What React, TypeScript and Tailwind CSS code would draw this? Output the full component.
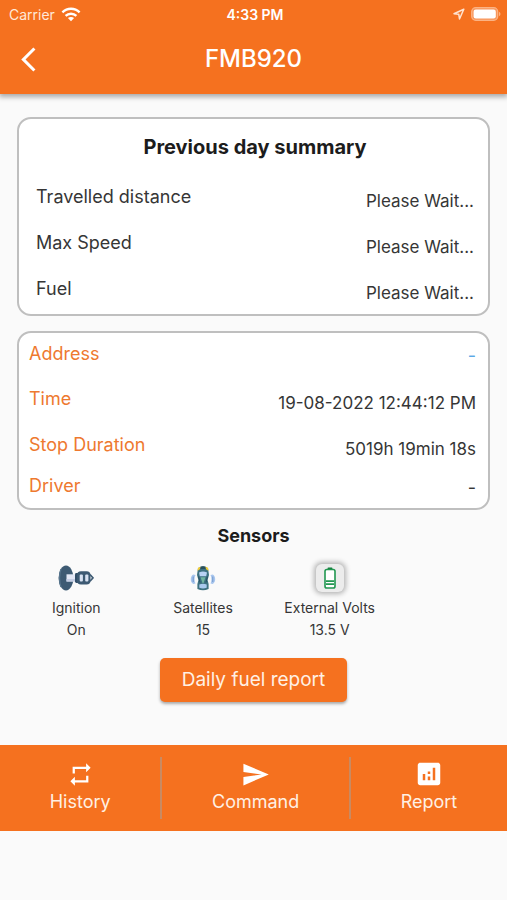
import type { ReactNode } from "react";
import { MdAnalytics, MdArrowBackIosNew, MdRepeat, MdSend } from "react-icons/md";

function WifiIcon() {
  return (
    <svg viewBox="0 0 20 15" className="h-[15px] w-5" aria-hidden="true">
      <g fill="none" stroke="white" strokeWidth="2.4">
        <path d="M1.4 5.4C6.3 0.6 13.7 0.6 18.6 5.4" />
        <path d="M4.6 8.9C7.6 6 12.4 6 15.4 8.9" />
      </g>
      <path d="M6.9 11C8.7 9.5 11.3 9.5 13.1 11L10 14.2Z" fill="white" />
    </svg>
  );
}

function LocationIcon() {
  return (
    <svg viewBox="0 0 12 12" className="h-3 w-3" fill="none" stroke="#ffe3d0" strokeWidth="1.5" strokeLinejoin="round" aria-hidden="true">
      <path d="M10.8 1.2L1 5.7L5.8 6.3L6.5 11Z" />
    </svg>
  );
}

function BatteryIcon() {
  return (
    <svg viewBox="0 0 30 14" className="h-[14px] w-[30px]" aria-hidden="true">
      <rect x="0.7" y="0.7" width="26" height="12.6" rx="4" fill="#f8965b" stroke="#fbb384" strokeWidth="1.3" />
      <rect x="2.6" y="2.6" width="22.2" height="8.8" rx="2.2" fill="white" />
      <path d="M28 4.8C30 5.6 30 8.4 28 9.2Z" fill="#fbb384" />
    </svg>
  );
}

function IgnitionIcon() {
  return (
    <svg viewBox="0 0 36 26" className="h-[26px] w-9" aria-hidden="true">
      <ellipse cx="8" cy="13" rx="7.4" ry="12.4" fill="#3d5a73" />
      <path d="M3 4C1 9 1 17 3 22" fill="none" stroke="#56748c" strokeWidth="1.4" />
      <rect x="8.5" y="9.3" width="8.5" height="7.2" fill="#e2e7f5" />
      <path d="M8.5 14H17V16.5H8.5Z" fill="#c5cee5" />
      <rect x="17" y="8" width="4" height="10" rx="1.4" fill="#324e68" />
      <rect x="19" y="6.2" width="13.5" height="13.4" rx="4" fill="#3d5a73" />
      <rect x="21.7" y="9.4" width="3.2" height="7" rx="1" fill="#d8e2f2" />
      <rect x="27.2" y="9.4" width="3.2" height="7" rx="1" fill="#d8e2f2" />
      <path d="M32 9.5L35 12.9L32 16.3" fill="none" stroke="#3d5a73" strokeWidth="1.6" />
    </svg>
  );
}

function CarIcon() {
  return (
    <svg viewBox="0 0 26 26" className="h-[26px] w-[26px]" aria-hidden="true">
      <g fill="#a9c6ee">
        <path d="M5.5 10C4.2 12.6 4.2 16 5.5 18.6L3.2 19C0 17.4 0 11.4 3.2 9.6Z" />
        <path d="M20.5 10C21.8 12.6 21.8 16 20.5 18.6L22.8 19C26 17.4 26 11.4 22.8 9.6Z" />
      </g>
      <path d="M3.2 11.5V17M22.8 11.5V17" stroke="#6f96ca" strokeWidth="1" />
      <path d="M8 3.2Q13 -0.6 18 3.2L19 10L17.6 15L18.6 19V24Q13 26.4 7.4 24V19L8.4 15L7 10Z" fill="#3d7180" />
      <path d="M10 2Q13 0.4 16 2L15.5 4H10.5Z" fill="#284f5d" />
      <path d="M7.4 6L8 2.8L10.6 1.8L9.9 4.2ZM18.6 6L18 2.8L15.4 1.8L16.1 4.2Z" fill="#f2cd35" />
      <path d="M9 7.6Q13 5.6 17 7.6L16.2 11.2H9.8Z" fill="#b9d2f3" />
      <path d="M10.5 12.2H15.5L13.5 18H12.5Z" fill="#72b5a0" />
      <path d="M9.3 19.4Q13 18 16.7 19.4V22.8Q13 24 9.3 22.8Z" fill="#a9c9ed" />
      <path d="M8.6 11.5L10 17.5M17.4 11.5L16 17.5" stroke="#254d62" strokeWidth="1" />
    </svg>
  );
}

function VoltsIcon() {
  return (
    <span className="flex h-7 w-7 items-center justify-center rounded-md bg-[#ececec] shadow-[0_0_5px_2px_#b4b4b4]">
      <svg viewBox="0 0 12 22" className="h-[22px] w-3" aria-hidden="true">
        <rect x="3.6" y="0.4" width="4.8" height="2.6" rx="0.7" fill="#147d3d" />
        <rect x="1" y="2.5" width="10" height="18.5" rx="1.8" fill="white" stroke="#219750" strokeWidth="1.6" />
        <path d="M2 14.2H10M2 17.2H10" stroke="#219750" strokeWidth="1.8" />
      </svg>
    </span>
  );
}

function SummaryRow({ label, value }: { label: string; value: string }) {
  return (
    <div className="flex h-[46px] justify-between leading-6">
      <dt>{label}</dt>
      <dd className="pt-1 text-[17px]">{value}</dd>
    </div>
  );
}

function Sensor({ icon, name, value }: { icon: ReactNode; name: string; value: string }) {
  return (
    <li className="flex flex-col items-center text-sm leading-[22px]">
      <span className="mb-[3px] flex h-8 items-center">{icon}</span>
      <span>{name}</span>
      <span>{value}</span>
    </li>
  );
}

function NavButton({ icon, label }: { icon: ReactNode; label: string }) {
  return (
    <button type="button" className="flex flex-col items-center leading-7">
      <span className="flex h-7 items-center">{icon}</span>
      <span>{label}</span>
    </button>
  );
}

export default function App() {
  return (
    <div className="min-h-screen bg-[#fafafa] font-['Inter',sans-serif] text-[#363636]">
      <header className="h-[94px] bg-[#f5711f] text-white shadow-[0_2px_5px_1px_#a9a9a9]">
        <div className="grid h-7 grid-cols-3 items-center pr-1.5 pl-[9px] text-[14px]">
          <div className="flex items-center gap-1.5 text-[#ffe8d8]">
            <span>Carrier</span>
            <WifiIcon />
          </div>
          <span className="text-center font-semibold">4:33 PM</span>
          <div className="flex items-center justify-end gap-1.5">
            <LocationIcon />
            <BatteryIcon />
          </div>
        </div>
        <div className="grid h-[62px] grid-cols-[48px_1fr_48px] items-center">
          <button type="button" aria-label="Back" className="flex justify-center pl-2">
            <MdArrowBackIosNew size={29} />
          </button>
          <h1 className="text-center text-2xl font-medium">FMB920</h1>
        </div>
      </header>

      <main>
        <section className="mx-[17px] mt-[23px] rounded-[14px] border-2 border-[#bfbfbf] bg-white pt-4 pr-[14px] pl-[17px]">
          <h2 className="mb-[26px] text-center text-xl leading-6 font-bold text-[#1c1c1c]">Previous day summary</h2>
          <dl className="-mb-[9px] text-lg">
            <SummaryRow label="Travelled distance" value="Please Wait..." />
            <SummaryRow label="Max Speed" value="Please Wait..." />
            <SummaryRow label="Fuel" value="Please Wait..." />
          </dl>
        </section>

        <section className="mx-[17px] mt-[15px] rounded-[14px] border-2 border-[#bfbfbf] bg-white pt-[9px] pr-3 pl-[10px]">
          <dl className="text-lg leading-6">
            <div className="flex h-[45px] justify-between">
              <dt className="text-[#ee792f]">Address</dt>
              <dd className="pt-0.5 text-[#5aa9e6]">-</dd>
            </div>
            <div className="flex h-[46px] justify-between">
              <dt className="text-[#ee792f]">Time</dt>
              <dd className="pt-1 text-[17px]">19-08-2022 12:44:12 PM</dd>
            </div>
            <div className="flex h-[41px] justify-between">
              <dt className="text-[#ee792f]">Stop Duration</dt>
              <dd className="pt-1 text-[17px]">5019h 19min 18s</dd>
            </div>
            <div className="flex h-[34px] justify-between">
              <dt className="text-[#ee792f]">Driver</dt>
              <dd className="pt-0.5">-</dd>
            </div>
          </dl>
        </section>

        <h2 className="mt-[14px] text-center text-lg leading-6 font-bold text-[#1c1c1c]">Sensors</h2>
        <ul className="mt-[14px] grid grid-cols-3 pr-[114px] pl-[13px]">
          <Sensor icon={<IgnitionIcon />} name="Ignition" value="On" />
          <Sensor icon={<CarIcon />} name="Satellites" value="15" />
          <Sensor icon={<VoltsIcon />} name="External Volts" value="13.5 V" />
        </ul>
        <div className="mt-[17px] flex justify-center">
          <button type="button" className="h-11 rounded-[5px] bg-[#f5711f] px-[22px] text-[19px] text-[#fff0e4] shadow-[0_2px_3px_#aaaaaa]">
            Daily fuel report
          </button>
        </div>
      </main>

      <nav className="mt-[43px] flex h-[86px] items-center justify-evenly bg-[#f5711f] text-lg text-[#fff0e4]">
        <NavButton icon={<MdRepeat size={27} className="text-white" />} label="History" />
        <span className="h-[62px] w-0.5 bg-[#c98a62]" />
        <NavButton icon={<MdSend size={29} className="text-white" />} label="Command" />
        <span className="h-[62px] w-0.5 bg-[#c98a62]" />
        <NavButton icon={<MdAnalytics size={30} className="text-white" />} label="Report" />
      </nav>
    </div>
  );
}
